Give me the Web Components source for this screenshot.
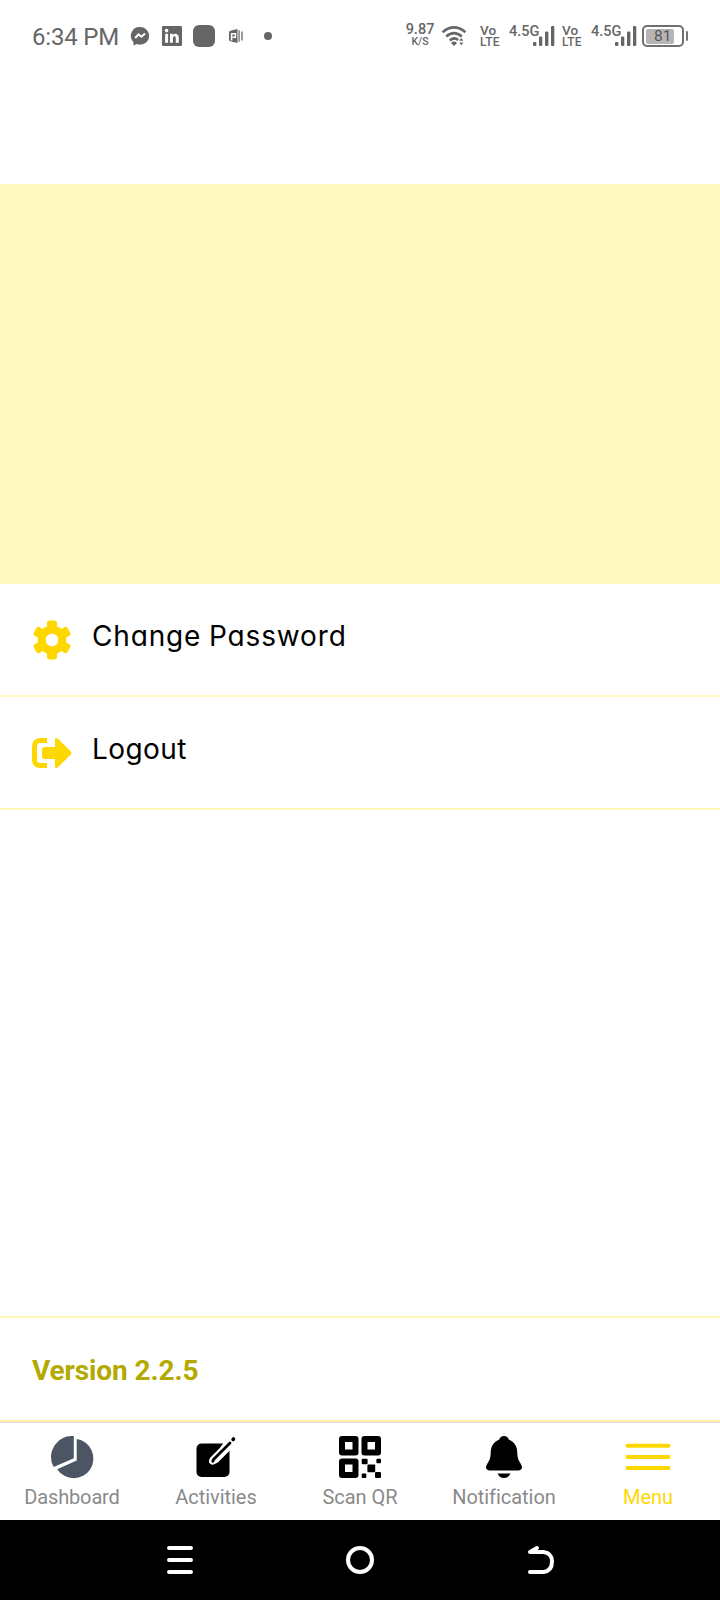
<!DOCTYPE html>
<html lang="en"><head><meta charset="utf-8"><title>Menu</title>
<style>html,body{margin:0;background:#fff}body{font-family:Roboto,sans-serif;width:720px;height:1600px;overflow:hidden}</style></head>
<body><menu-screen></menu-screen>
<script>
const define = (name, html) => customElements.define(name, class extends HTMLElement {
  constructor() {
    super();
    const t = document.createElement('template');
    t.innerHTML = html;
    this.attachShadow({mode: 'open'}).append(t.content.cloneNode(true));
  }
});

const tooth = 'd="M15 8V2.2Q15 1.4 16 1 20-.4 24 1q1 .4 1 1.2V8l1 3H14zM15 32v5.8q0 .8 1 1.2 4 1.4 8 0 1-.4 1-1.2V32l1-3H14z"';
const icons = {
  messenger: [18, 19, '<path fill="currentColor" d="M9 0a9 8.8 0 1 1-3.2 17L2.5 18.6 2.4 15A8.8 8.8 0 0 1 9 0z"/><path d="M4.2 11l3.3-3.6 3 2.4 3.5-3.2" stroke="#fff" stroke-width="2" fill="none"/>'],
  linkedin: [20, 20, '<rect width="20" height="20" rx="1" fill="currentColor"/><g fill="#fff"><circle cx="4.6" cy="4.6" r="1.8"/><path d="M3.1 7.8h3v9h-3zM8 7.8h2.8V9c1.6-2.3 6-1.9 6 2.7v5.1h-3v-4.6c0-2.8-2.9-2.6-2.9 0v4.6H8z"/></g>'],
  square: [22, 22, '<rect width="22" height="22" rx="6" fill="currentColor"/>'],
  play: [14, 14, '<path fill="currentColor" d="M0 2.5L3 1.2 8.5 0v14L3 12.8 0 11.5zM9.5 1.3h1.2v11.4H9.5zM12.3 2.5h1.3v9h-1.3z"/><path d="M2.6 11.5V4.7h3.8v3.6H3.5" stroke="#fff" stroke-width="1.5" fill="none"/>'],
  dot: [8, 8, '<circle cx="4" cy="4" r="4" fill="currentColor"/>'],
  wifi: [24, 20, '<g fill="none" stroke="currentColor" stroke-width="2.6"><path d="M.6 6.2Q12-3.3 23.4 6.2M4.2 10.5Q12 3.7 19.8 10.5M7.8 14.4Q12 10.7 16.2 14"/></g><path fill="currentColor" d="M9 17q3-2.8 6 0l-3 3zM17.2 14.8l2.1-2.8 2.1 2.8zM17.2 16.5l2.1 2.8 2.1-2.8z"/>'],
  signal: [22, 20, '<g fill="currentColor"><rect y="16" width="3.4" height="4" rx="1"/><rect x="6" y="10.5" width="3.3" height="9.5" rx="1"/><rect x="12" y="5.5" width="3.4" height="14.5" rx="1"/><rect x="18" width="3.3" height="20" rx="1"/></g>'],
  gear: [40, 40, `<g fill="currentColor"><path ${tooth}/><path transform="rotate(60 20 20)" ${tooth}/><path transform="rotate(120 20 20)" ${tooth}/></g><circle cx="20" cy="20" r="10.3" fill="none" stroke="currentColor" stroke-width="8.2"/><circle cx="20" cy="20" r="6.2" fill="#fff"/>`],
  logout: [40, 30, '<path fill="currentColor" d="M15 0v5H8Q5 5 5 8v14q0 3 3 3h7v5H9Q0 30 0 21V9Q0 0 9 0zM23 2q0-3 2.7-1.4l13.2 13q1 1.4 0 2.8l-13.2 13Q23 31 23 28v-7H13q-3 0-3-3v-6q0-3 3-3h10z"/>'],
  dashboard: [42, 42, '<path fill="currentColor" d="M22.8 0v22.2L2.7 31A21 21 0 0 1 22.8 0zM25.7 3A19.7 19.7 0 1 1 6.2 33.2l19.5-8.7z"/>'],
  edit: [40, 42, '<rect x=".5" y="7.5" width="33" height="33.5" rx="5" fill="currentColor"/><path d="M31 6.5L16 21.5q-3 3.5-1.3 5.3T20 26L37 9" stroke="#fff" stroke-width="2.4" fill="none"/><path d="M27.7 6.4h8v8.5l-2.2-.2-12 12-4-5z" fill="#fff"/><path d="M32.5 6.7L16.8 22.4q-2.6 3-1.5 4.1t4.2-1.3L35 9.7" fill="#fff"/><path d="M34 7L18.5 22.5q-1.5 1.6-1.7 2.8" stroke="currentColor" stroke-width="2.8" stroke-linecap="round" fill="none"/><path d="M37.1 3.4l.4-.4" stroke="currentColor" stroke-width="3.6" stroke-linecap="round"/>'],
  qr: [42, 42, '<g fill="none" stroke="currentColor" stroke-width="6" stroke-linejoin="round"><rect x="3" y="3" width="13.5" height="13.5"/><rect x="25.5" y="3" width="13.5" height="13.5"/><rect x="3" y="25.5" width="13.5" height="13.5"/></g><g fill="currentColor"><rect x="22.7" y="22.7" width="5.9" height="5.6" rx="1"/><rect x="37.4" y="22.7" width="4.6" height="4.6" rx="1"/><rect x="28.4" y="28.4" width="7.8" height="7.8" rx="1"/><rect x="22.7" y="37.4" width="4.6" height="4.6" rx="1"/><rect x="36" y="36" width="6" height="6" rx="1"/></g>'],
  bell: [36, 42, '<path fill="currentColor" d="M18 0q3.7 0 5 3.8C29 6.5 31.3 11 31.3 17q0 6 3.4 10.8Q36 29.7 36 31.5q-.2 2.8-3.8 2.9H3.8Q.2 34.3 0 31.5q0-1.8 1.3-3.7Q4.7 23 4.7 17C4.7 11 7 6.5 13 3.8Q14.3 0 18 0zM11.5 37.5h13q-2.2 4.5-6.5 4.5t-6.5-4.5z"/>'],
  menu: [46, 42, '<path d="M2.5 9.8h41M2.5 21h41M2.5 32h41" stroke="currentColor" stroke-width="4" stroke-linecap="round"/>'],
  recents: [26, 28, '<path d="M2 2h22M2 14h22M2 26h22" stroke="currentColor" stroke-width="4" stroke-linecap="round"/>'],
  home: [28, 28, '<circle cx="14" cy="14" r="12" fill="none" stroke="currentColor" stroke-width="4"/>'],
  back: [26, 28, '<path d="M9 2L2 6h13.5q8.5 1 8.5 9.5 0 9.5-8.5 10.5H2" fill="none" stroke="currentColor" stroke-width="4" stroke-linecap="round" stroke-linejoin="round"/>']
};
customElements.define('ui-icon', class extends HTMLElement {
  connectedCallback() {
    const [w, h, art] = icons[this.getAttribute('name')];
    this.attachShadow({mode: 'open'}).innerHTML =
      `<style>:host{display:block;flex:none;width:${w}px;height:${h}px}svg{display:block;overflow:visible}</style><svg width="${w}" height="${h}" viewBox="0 0 ${w} ${h}">${art}</svg>`;
  }
});

define('stacked-label', `<style>:host{display:flex;flex-direction:column;flex:none;font-weight:500;white-space:nowrap}</style><slot></slot>`);

define('battery-meter', `<style>
:host{display:flex;align-items:center;gap:2px;flex:none}
.shell{box-sizing:border-box;width:42px;height:22px;border:2px solid #707070;border-radius:5px;padding:1.5px 2px}
.level{width:28px;height:15px;border-radius:2px;background:#b5b5b5;color:#555;font:400 15.5px/15px Roboto,sans-serif;text-indent:8px}
.tip{width:2px;height:10px;background:#777;border-radius:1px}
</style><div class="shell"><div class="level"><slot></slot></div></div><div class="tip"></div>`);

define('status-bar', `<style>
:host{display:flex;box-sizing:border-box;height:72px;padding:0 32px;align-items:center;color:#666}
.time{width:99px;font-size:24px;line-height:28px;white-space:nowrap;letter-spacing:-.2px;padding-top:1px;box-sizing:border-box}
.net{width:28px;align-items:center}
.lte{width:22px}
.gen{width:24px;font-size:14.5px;line-height:16px;font-weight:500;align-self:flex-start;margin-top:24px}
</style>
<span class="time">6:34 PM</span>
<ui-icon name="messenger"></ui-icon><ui-icon name="linkedin" style="margin-left:13px"></ui-icon>
<ui-icon name="square" style="margin-left:11px"></ui-icon><ui-icon name="play" style="margin-left:14px"></ui-icon>
<ui-icon name="dot" style="margin-left:21px"></ui-icon>
<stacked-label class="net" style="margin-left:134px;margin-top:-2px"><span style="font-size:14.5px;line-height:14px">9.87</span><span style="font-size:10.5px;line-height:10px">K/S</span></stacked-label>
<ui-icon name="wifi" style="margin-left:8px"></ui-icon>
<stacked-label class="lte" style="margin-left:14px"><span style="font-size:13.5px;line-height:12px">Vo</span><span style="font-size:12px;line-height:12px;letter-spacing:.2px">LTE</span></stacked-label>
<span class="gen" style="margin-left:7px">4.5G</span><ui-icon name="signal"></ui-icon>
<stacked-label class="lte" style="margin-left:7px"><span style="font-size:13.5px;line-height:12px">Vo</span><span style="font-size:12px;line-height:12px;letter-spacing:.2px">LTE</span></stacked-label>
<span class="gen" style="margin-left:7px">4.5G</span><ui-icon name="signal"></ui-icon>
<battery-meter style="margin-left:5px">81</battery-meter>`);

define('menu-row', `<style>
:host{display:flex;box-sizing:border-box;height:113px;border-bottom:2px solid #fff9c0;padding:0 32px;align-items:center}
.icon{display:flex;width:60px;color:#ffd700}
.label{font:400 28px/40px Inter,"Open Sans",sans-serif;font-feature-settings:"cv11" 1;color:#000;padding-bottom:7px;white-space:nowrap;letter-spacing:var(--track,.5px);word-spacing:-1px}
</style><div class="icon"><slot name="icon"></slot></div><span class="label"><slot></slot></span>`);

define('tab-item', `<style>
:host{display:flex;flex:1 1 0;flex-direction:column;align-items:center;font-size:20px;line-height:24px;color:#8a8a8b;padding-top:14px;gap:7px;white-space:nowrap;letter-spacing:-.05px}
</style><slot name="icon"></slot><span><slot></slot></span>`);

define('tab-bar', `<style>
:host{display:flex;box-sizing:border-box;height:100px;border-top:2px solid #faeea6;box-shadow:inset 0 1px #dfdfdf}
</style><slot></slot>`);

define('system-nav', `<style>
:host{display:flex;height:80px;background:#000;color:#fff;justify-content:space-between;align-items:center;box-sizing:border-box;padding:0 166px 0 167px}
ui-icon[name=home]{margin-right:2px}
</style><ui-icon name="recents"></ui-icon><ui-icon name="home"></ui-icon><ui-icon name="back"></ui-icon>`);

define('menu-screen', `<style>
:host{display:flex;flex-direction:column;height:1600px;width:720px}
.banner{height:400px;margin-top:112px;background:#fff9c0}
.version{box-sizing:border-box;height:104px;margin-top:auto;border-top:2px solid #fff9c0;padding:3px 32px 0;display:flex;align-items:center;font-size:28px;font-weight:700;letter-spacing:-.1px;color:#b3a900}
</style>
<status-bar></status-bar>
<div class="banner"></div>
<menu-row style="--track:.85px"><ui-icon slot="icon" name="gear"></ui-icon>Change Password</menu-row>
<menu-row style="--track:.4px"><ui-icon slot="icon" name="logout"></ui-icon>Logout</menu-row>
<div class="version">Version 2.2.5</div>
<tab-bar>
<tab-item style="letter-spacing:-.15px"><ui-icon slot="icon" name="dashboard" style="color:#4b5563"></ui-icon>Dashboard</tab-item>
<tab-item><ui-icon slot="icon" name="edit" style="color:#000"></ui-icon>Activities</tab-item>
<tab-item><ui-icon slot="icon" name="qr" style="color:#000"></ui-icon>Scan QR</tab-item>
<tab-item><ui-icon slot="icon" name="bell" style="color:#000"></ui-icon>Notification</tab-item>
<tab-item style="color:#ffd700"><ui-icon slot="icon" name="menu"></ui-icon>Menu</tab-item>
</tab-bar>
<system-nav></system-nav>`);
</script></body></html>
